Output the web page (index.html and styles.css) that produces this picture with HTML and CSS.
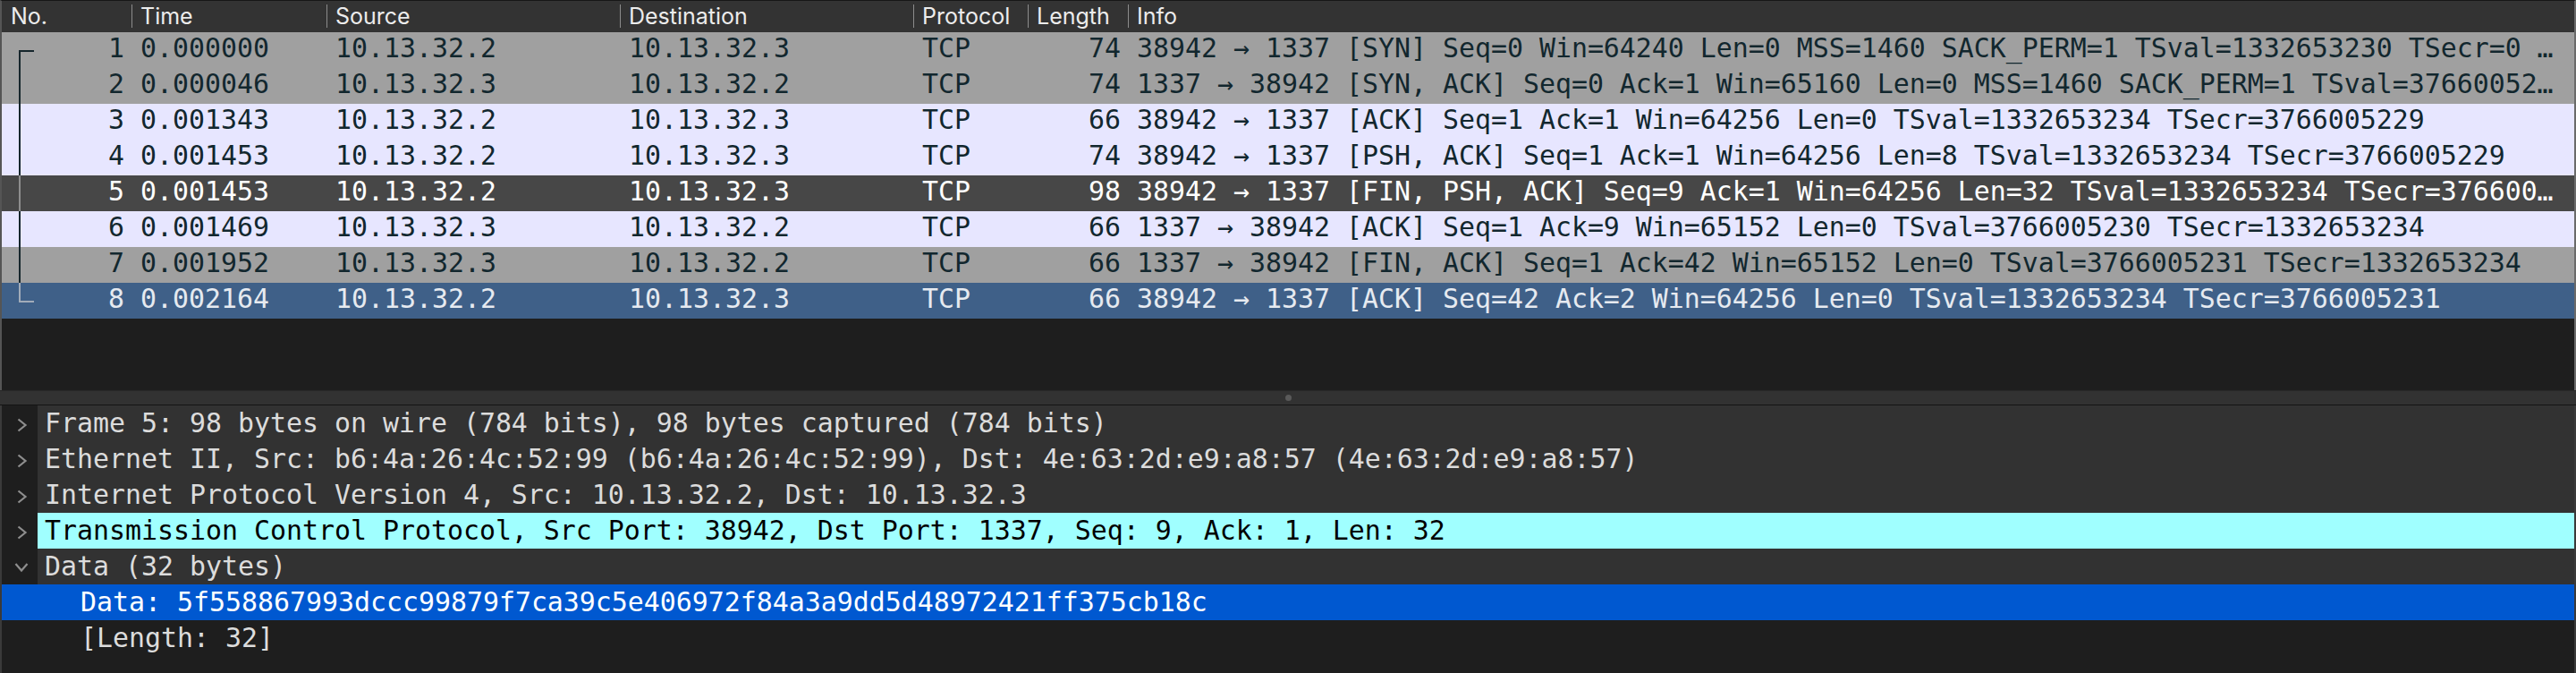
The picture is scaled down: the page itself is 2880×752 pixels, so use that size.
FILE: index.html
```html
<!DOCTYPE html>
<html lang="en">
<head>
<meta charset="utf-8">
<title>Wireshark</title>
<link rel="stylesheet" href="styles.css">
</head>
<body>
<div class="app">
  <section class="packet-list">
    <div class="cols head">
      <div class="hcell">No.</div>
      <div class="hcell sep">Time</div>
      <div class="hcell sep">Source</div>
      <div class="hcell sep">Destination</div>
      <div class="hcell sep">Protocol</div>
      <div class="hcell sep">Length</div>
      <div class="hcell sep">Info</div>
    </div>
    <div class="cols prow syn">
      <div class="cell num rel rel-first">1</div><div class="cell">0.000000</div><div class="cell">10.13.32.2</div><div class="cell">10.13.32.3</div><div class="cell">TCP</div><div class="cell num">74</div><div class="cell">38942 → 1337 [SYN] Seq=0 Win=64240 Len=0 MSS=1460 SACK_PERM=1 TSval=1332653230 TSecr=0 …</div>
    </div>
    <div class="cols prow syn">
      <div class="cell num rel rel-mid">2</div><div class="cell">0.000046</div><div class="cell">10.13.32.3</div><div class="cell">10.13.32.2</div><div class="cell">TCP</div><div class="cell num">74</div><div class="cell">1337 → 38942 [SYN, ACK] Seq=0 Ack=1 Win=65160 Len=0 MSS=1460 SACK_PERM=1 TSval=37660052…</div>
    </div>
    <div class="cols prow tcp">
      <div class="cell num rel rel-mid">3</div><div class="cell">0.001343</div><div class="cell">10.13.32.2</div><div class="cell">10.13.32.3</div><div class="cell">TCP</div><div class="cell num">66</div><div class="cell">38942 → 1337 [ACK] Seq=1 Ack=1 Win=64256 Len=0 TSval=1332653234 TSecr=3766005229</div>
    </div>
    <div class="cols prow tcp">
      <div class="cell num rel rel-mid">4</div><div class="cell">0.001453</div><div class="cell">10.13.32.2</div><div class="cell">10.13.32.3</div><div class="cell">TCP</div><div class="cell num">74</div><div class="cell">38942 → 1337 [PSH, ACK] Seq=1 Ack=1 Win=64256 Len=8 TSval=1332653234 TSecr=3766005229</div>
    </div>
    <div class="cols prow current">
      <div class="cell num rel rel-mid">5</div><div class="cell">0.001453</div><div class="cell">10.13.32.2</div><div class="cell">10.13.32.3</div><div class="cell">TCP</div><div class="cell num">98</div><div class="cell">38942 → 1337 [FIN, PSH, ACK] Seq=9 Ack=1 Win=64256 Len=32 TSval=1332653234 TSecr=376600…</div>
    </div>
    <div class="cols prow tcp">
      <div class="cell num rel rel-mid">6</div><div class="cell">0.001469</div><div class="cell">10.13.32.3</div><div class="cell">10.13.32.2</div><div class="cell">TCP</div><div class="cell num">66</div><div class="cell">1337 → 38942 [ACK] Seq=1 Ack=9 Win=65152 Len=0 TSval=3766005230 TSecr=1332653234</div>
    </div>
    <div class="cols prow syn">
      <div class="cell num rel rel-mid">7</div><div class="cell">0.001952</div><div class="cell">10.13.32.3</div><div class="cell">10.13.32.2</div><div class="cell">TCP</div><div class="cell num">66</div><div class="cell">1337 → 38942 [FIN, ACK] Seq=1 Ack=42 Win=65152 Len=0 TSval=3766005231 TSecr=1332653234</div>
    </div>
    <div class="cols prow selected">
      <div class="cell num rel rel-last">8</div><div class="cell">0.002164</div><div class="cell">10.13.32.2</div><div class="cell">10.13.32.3</div><div class="cell">TCP</div><div class="cell num">66</div><div class="cell">38942 → 1337 [ACK] Seq=42 Ack=2 Win=64256 Len=0 TSval=1332653234 TSecr=3766005231</div>
    </div>
  </section>

  <div class="splitter"><span class="grip"></span></div>

  <section class="details">
    <div class="trow top">
      <div class="exp"><svg class="chev-r" width="12" height="16" viewBox="0 0 12 16"><path d="M1.5 1.5 L9.5 8 L1.5 14.5" /></svg></div>
      <div class="label">Frame 5: 98 bytes on wire (784 bits), 98 bytes captured (784 bits)</div>
    </div>
    <div class="trow top">
      <div class="exp"><svg class="chev-r" width="12" height="16" viewBox="0 0 12 16"><path d="M1.5 1.5 L9.5 8 L1.5 14.5" /></svg></div>
      <div class="label">Ethernet II, Src: b6:4a:26:4c:52:99 (b6:4a:26:4c:52:99), Dst: 4e:63:2d:e9:a8:57 (4e:63:2d:e9:a8:57)</div>
    </div>
    <div class="trow top">
      <div class="exp"><svg class="chev-r" width="12" height="16" viewBox="0 0 12 16"><path d="M1.5 1.5 L9.5 8 L1.5 14.5" /></svg></div>
      <div class="label">Internet Protocol Version 4, Src: 10.13.32.2, Dst: 10.13.32.3</div>
    </div>
    <div class="trow top marked">
      <div class="exp"><svg class="chev-r" width="12" height="16" viewBox="0 0 12 16"><path d="M1.5 1.5 L9.5 8 L1.5 14.5" /></svg></div>
      <div class="label">Transmission Control Protocol, Src Port: 38942, Dst Port: 1337, Seq: 9, Ack: 1, Len: 32</div>
    </div>
    <div class="trow top">
      <div class="exp"><svg class="chev-d" width="16" height="12" viewBox="0 0 16 12"><path d="M1.5 2 L8 9.5 L14.5 2" /></svg></div>
      <div class="label">Data (32 bytes)</div>
    </div>
    <div class="trow child selected">
      <div class="exp"></div>
      <div class="label">Data: 5f558867993dccc99879f7ca39c5e406972f84a3a9dd5d48972421ff375cb18c</div>
    </div>
    <div class="trow child">
      <div class="exp"></div>
      <div class="label">[Length: 32]</div>
    </div>
  </section>
</div>
</body>
</html>
```

FILE: styles.css
```css
* { box-sizing: border-box; }

html, body {
  margin: 0;
  padding: 0;
}

body {
  width: 2880px;
  height: 752px;
  overflow: hidden;
  background: #1e1e1e;
  font-family: "DejaVu Sans Mono", "Liberation Mono", monospace;
}

.app {
  display: flex;
  flex-direction: column;
  height: 752px;
}

/* ---------- packet list ---------- */
.packet-list {
  height: 436px;
  flex: none;
  background: #1e1e1e;
  border-top: 1px solid #161616;
  border-left: 2px solid #555555;
  border-right: 2px solid #6a6a6a;
}

.cols {
  display: grid;
  grid-template-columns: 145px 218px 328px 328px 128px 112px 1fr;
}

.head {
  height: 35px;
  background: #333333;
}

.hcell {
  font-family: "Inter", "Liberation Sans", sans-serif;
  font-size: 25px;
  line-height: 34px;
  color: #ececec;
  padding-left: 10px;
  white-space: nowrap;
  overflow: hidden;
}

.hcell.sep {
  background: linear-gradient(#8c8c8c, #8c8c8c) no-repeat 0 4px / 1px 26px;
}

.prow {
  height: 40px;
  color: #12272e;
}

.cell {
  font-size: 29.9px;
  line-height: 35px;
  padding: 0 8px 5px 10px;
  white-space: pre;
  overflow: hidden;
}

.cell.num { text-align: right; }

.syn { background: #a0a0a0; }
.tcp { background: #e7e6ff; }
.current { background: #474747; color: #ffffff; }
.selected { background: #3f6088; color: #e6eaf0; }

/* related-packet bracket in the No. column */
.rel { position: relative; --rel: #16262c; }
.current .rel { --rel: #8e8e8e; }
.selected .rel { --rel: #a2acb9; }

.rel::before,
.rel::after {
  content: "";
  position: absolute;
  background: var(--rel);
}

.rel::before {
  left: 19px;
  width: 2px;
  top: 0;
  bottom: 0;
}

.rel-first::before { top: 20px; }
.rel-last::before { bottom: auto; height: 22px; }

.rel-mid::after { display: none; }

.rel-first::after,
.rel-last::after {
  left: 19px;
  top: 20px;
  width: 17px;
  height: 2px;
}

/* ---------- splitter ---------- */
.splitter {
  height: 17px;
  flex: none;
  background: #323232;
  border-top: 1px solid #282828;
  border-bottom: 1px solid #141414;
  display: flex;
  align-items: center;
  justify-content: center;
}

.grip {
  width: 7px;
  height: 7px;
  border-radius: 50%;
  background: #5a5a5a;
}

/* ---------- packet details ---------- */
.details {
  flex: 1;
  background: #1e1e1e;
  border-left: 2px solid #3a3a3a;
  border-right: 2px solid #3a3a3a;
}

.trow {
  display: flex;
  height: 40px;
  color: #dcdcdc;
  font-size: 29.9px;
  line-height: 40px;
  white-space: pre;
}

.exp {
  width: 40px;
  flex: none;
  display: flex;
  align-items: center;
  justify-content: center;
}

.exp svg path {
  fill: none;
  stroke: #8e8e8e;
  stroke-width: 2.2;
}

.chev-r { margin: 3px 0 0 6px; }
.chev-d { margin: 1px 0 0 3px; }

.label {
  flex: 1;
  padding-left: 8px;
  overflow: hidden;
}

.top .label { background: #323232; }
.child .label { padding-left: 48px; }

.marked .label {
  background: #a0ffff;
  color: #000000;
}

.trow.selected {
  background: #0058d0;
  color: #ffffff;
}
```
